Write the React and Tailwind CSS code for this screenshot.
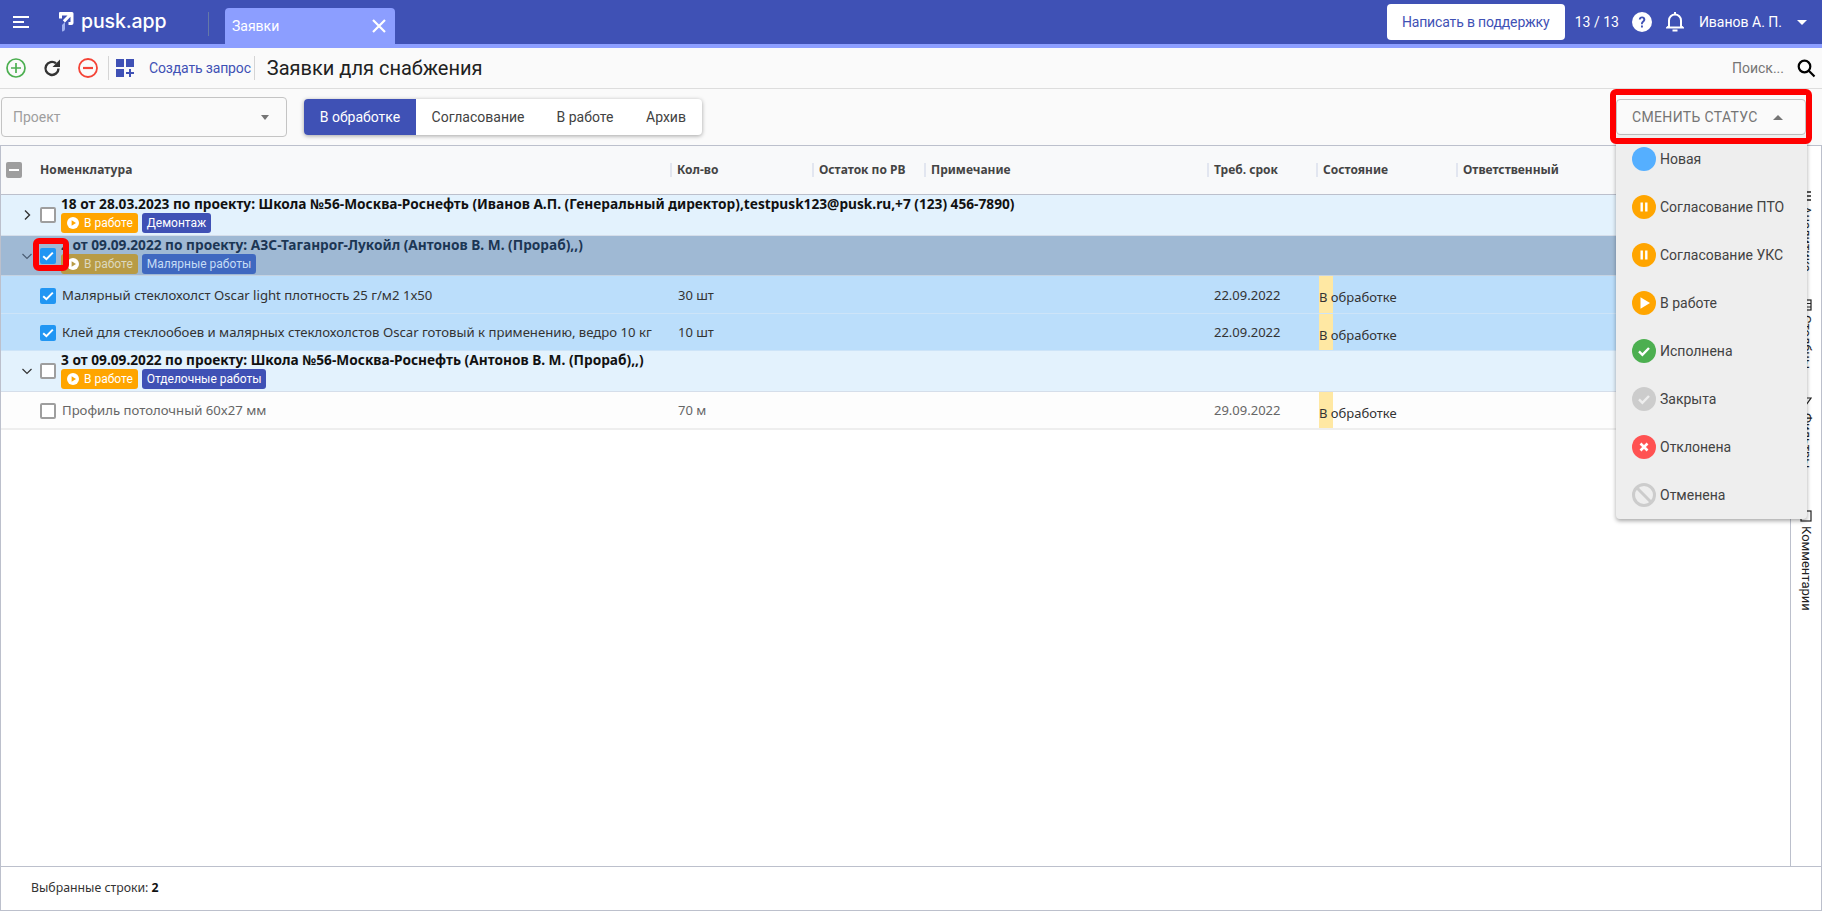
import React from "react";

const cols = "grid grid-cols-[669px_142px_112px_283px_109px_140px_1fr]";

function Check({ state = "off" }) {
  if (state === "on") {
    return (
      <span className="flex h-4 w-4 shrink-0 items-center justify-center rounded-[2px] bg-[#2196f3]">
        <svg width="12" height="10" viewBox="0 0 12 10" fill="none">
          <path d="M1.2 5.2 4.4 8.2 10.8 1.6" stroke="#fff" strokeWidth="2" />
        </svg>
      </span>
    );
  }
  if (state === "some") {
    return (
      <span className="flex h-4 w-4 shrink-0 items-center justify-center rounded-[2px] bg-[#9e9e9e]">
        <span className="h-[2px] w-[10px] bg-white" />
      </span>
    );
  }
  return <span className="block h-4 w-4 shrink-0 rounded-[2px] border-2 border-[#9e9e9e] bg-white" />;
}

function Chevron({ open, color = "#333" }) {
  return (
    <svg width="12" height="12" viewBox="0 0 12 12" fill="none" className="shrink-0">
      {open ? (
        <path d="M1.5 4 6 8.5 10.5 4" stroke={color} strokeWidth="1.2" />
      ) : (
        <path d="M4 1.5 8.5 6 4 10.5" stroke={color} strokeWidth="1.4" />
      )}
    </svg>
  );
}

function PlayDot({ fill = "#ffa500" }) {
  return (
    <svg width="12" height="12" viewBox="0 0 12 12" className="shrink-0">
      <circle cx="6" cy="6" r="6" fill="#fff" />
      <path d="M4.6 3.2v5.6L9 6z" fill={fill} />
    </svg>
  );
}

function GroupRow({ title, type, open, checked, selected, h }) {
  return (
    <div
      className={`flex shrink-0 items-start border-b ${h} ${
        selected ? "border-[#c5d3e2] bg-[#9fb9d4]" : "border-[#d5deea] bg-[#e3f2fd]"
      }`}
    >
      <div className="flex items-center pt-[12px] pl-[20px]">
        <Chevron open={open} color={selected ? "#4a5d73" : "#333"} />
        <div className="ml-[7px]">
          <Check state={checked ? "on" : "off"} />
        </div>
      </div>
      <div className="ml-[5px] flex flex-col">
        <div
          className={`h-[18px] text-[13.7px] leading-[18px] font-bold whitespace-nowrap ${
            selected ? "text-[#1c3654]" : "text-[#111]"
          }`}
        >
          {title}
        </div>
        <div className="flex gap-1 font-[Roboto] text-[12px] leading-[20px]">
          <span
            className={`flex h-5 items-center gap-[5px] rounded-[3px] pr-[5px] pl-[6px] ${
              selected ? "bg-[#b89b45] text-[#dcd8bf]" : "bg-[#ffa500] text-white"
            }`}
          >
            <PlayDot fill={selected ? "#b89b45" : "#ffa500"} />В работе
          </span>
          <span
            className={`flex h-5 items-center rounded-[3px] px-[5px] ${
              selected ? "bg-[#3f68c0] text-[#c5dcf5]" : "bg-[#3f51b5] text-white"
            }`}
          >
            {type}
          </span>
        </div>
      </div>
    </div>
  );
}

function ItemRow({ name, qty, date, checked, h, selected }) {
  return (
    <div
      className={`${cols} shrink-0 border-b text-[13px] ${h} ${
        selected ? "border-[#cde4f8] bg-[#bbdefb] text-[#333]" : "border-b-2 border-[#eeeeee] bg-[#fdfdfd] text-[#666]"
      }`}
    >
      <div className="flex items-center pt-[2px] pl-[39px]">
        <Check state={checked ? "on" : "off"} />
        <span className="ml-[6px] text-[13.15px] whitespace-nowrap">{name}</span>
      </div>
      <div className="flex items-center pt-[2px] pl-[8px]">{qty}</div>
      <div />
      <div />
      <div className="flex items-center pt-[2px] pl-[7px]">{date}</div>
      <div className="pl-[3px]">
        <div className="h-full w-[14px] bg-[#ffe8a3] pt-[12px] whitespace-nowrap text-[#333]">В обработке</div>
      </div>
      <div />
    </div>
  );
}

function HeadCell({ children, first }) {
  return (
    <div className="flex items-center">
      {!first && <span className="mr-[5px] h-[14px] w-[2px] bg-[#e2e6f0]" />}
      <span className="whitespace-nowrap">{children}</span>
    </div>
  );
}

const statuses = [
  { label: "Новая", icon: <circle cx="12" cy="12" r="12" fill="#55afff" /> },
  {
    label: "Согласование ПТО",
    icon: (
      <>
        <circle cx="12" cy="12" r="12" fill="#ffa500" />
        <path d="M8.5 7.5h2.4v9H8.5zM13.1 7.5h2.4v9h-2.4z" fill="#fff" />
      </>
    ),
  },
  {
    label: "Согласование УКС",
    icon: (
      <>
        <circle cx="12" cy="12" r="12" fill="#ffa500" />
        <path d="M8.5 7.5h2.4v9H8.5zM13.1 7.5h2.4v9h-2.4z" fill="#fff" />
      </>
    ),
  },
  {
    label: "В работе",
    icon: (
      <>
        <circle cx="12" cy="12" r="12" fill="#ffa500" />
        <path d="M8.5 6.2v11.6L18 12z" fill="#fff" />
      </>
    ),
  },
  {
    label: "Исполнена",
    icon: (
      <>
        <circle cx="12" cy="12" r="12" fill="#4caf50" />
        <path d="M7 12.4l3.4 3.4L17 9" stroke="#fff" strokeWidth="2.4" fill="none" />
      </>
    ),
  },
  {
    label: "Закрыта",
    icon: (
      <>
        <circle cx="12" cy="12" r="12" fill="#cccccc" />
        <path d="M7 12.4l3.4 3.4L17 9" stroke="#eee" strokeWidth="2.4" fill="none" />
      </>
    ),
  },
  {
    label: "Отклонена",
    icon: (
      <>
        <circle cx="12" cy="12" r="12" fill="#ff5252" />
        <path d="M8.5 8.5l7 7M15.5 8.5l-7 7" stroke="#fff" strokeWidth="2.6" />
      </>
    ),
  },
  {
    label: "Отменена",
    icon: (
      <>
        <circle cx="12" cy="12" r="10.5" fill="none" stroke="#ccc" strokeWidth="3" />
        <path d="M4.8 4.8l14.4 14.4" stroke="#ccc" strokeWidth="3" />
      </>
    ),
  },
];

function SideTab({ icon, label, pt }) {
  return (
    <div className={`flex flex-col items-center ${pt}`}>
      {icon}
      <span className="mt-[4px] font-[Roboto] text-[13px] leading-[16px] whitespace-nowrap text-[#222] [writing-mode:vertical-lr]">
        {label}
      </span>
    </div>
  );
}

export default function App() {
  return (
    <div className="relative flex h-[911px] w-[1822px] flex-col overflow-hidden bg-white font-['Noto_Sans',sans-serif]">
      {/* top bar */}
      <div className="flex h-12 shrink-0 border-b-4 border-[#8c9eff] bg-[#3f51b5] font-[Roboto] text-[14px] text-white">
        <div className="flex w-[208px] items-center">
          <svg width="16" height="12" viewBox="0 0 16 12" className="ml-[13px]" fill="#fff">
            <rect width="16" height="2" />
            <rect y="5" width="11" height="2" />
            <rect y="10" width="16" height="2" />
          </svg>
          <svg width="15" height="20" viewBox="0 0 15 20" className="ml-[30px]">
            <path d="M3 13 6 10v6.500a3 3 0 0 1-3 3z" fill="#9fb0ef" />
            <path
              d="M1 0h12a1.500 1.500 0 0 1 1.500 1.500V11a2 2 0 0 1-2 2H9.500v-3H11.500V4.800L6 10.500 3.800 8.200 8.500 3.500H3v3H0V1a1 1 0 0 1 1-1z"
              fill="#fff"
            />
          </svg>
          <span className="ml-[7px] font-[Inter] text-[19.5px] leading-none font-medium tracking-[-0.1px]">pusk.app</span>
        </div>
        <span className="mt-3 h-6 w-px bg-[#6478a8]" />
        <div className="mt-2 ml-4 flex h-9 w-[170px] items-center justify-between rounded-t bg-[#8c9eff] pr-[9px] pl-[7px]">
          <span>Заявки</span>
          <svg width="14" height="14" viewBox="0 0 14 14" stroke="#fff" strokeWidth="2.200">
            <path d="M1 1l12 12M13 1 1 13" />
          </svg>
        </div>
        <div className="ml-auto flex items-center">
          <div className="flex h-9 w-[178px] items-center justify-center rounded bg-white tracking-[-0.15px] text-[#3f51b5]">
            Написать в поддержку
          </div>
          <span className="ml-[10px]">13 / 13</span>
          <svg width="20" height="20" viewBox="0 0 20 20" className="ml-[13px]">
            <circle cx="10" cy="10" r="10" fill="#fff" />
            <path d="M6.800 7.600C6.900 5.700 8.200 4.500 10.100 4.500c1.900 0 3.200 1.200 3.200 2.900 0 2.600-2.500 2.500-2.500 4.900H9c0-3.300 2.300-3.300 2.300-4.800 0-.7-.5-1.300-1.200-1.300-.9 0-1.300.6-1.400 1.400zM9 13.500h1.900v1.900H9z" fill="#3f51b5" />
          </svg>
          <svg width="18" height="20" viewBox="0 0 18 20" className="ml-[14px]" fill="none" stroke="#fff" strokeWidth="2">
            <path d="M3 14V8.500a6 6 0 0 1 12 0V14l1.500 1.500h-15z" />
            <path d="M9 0v3M6.500 18.500h5" />
          </svg>
          <span className="ml-[15px]">Иванов А. П.</span>
          <span className="mr-[15px] ml-[15px] h-0 w-0 border-x-[5px] border-t-[5px] border-x-transparent border-t-white" />
        </div>
      </div>

      {/* toolbar */}
      <div className="flex h-[41px] shrink-0 items-center border-b border-[#dddddd] bg-[#fafafa]">
        <svg width="20" height="20" viewBox="0 0 20 20" className="ml-[6px]" fill="none" stroke="#4caf50" strokeWidth="1.700">
          <circle cx="10" cy="10" r="9" />
          <path d="M10 5v10M5 10h10" />
        </svg>
        <svg width="18" height="18" viewBox="0 0 18 18" className="ml-[17px]" fill="none" stroke="#333" strokeWidth="2.400">
          <path d="M15.500 9.500a6.500 6.500 0 1 1-2.500-5.200" />
          <path d="M17 0.500v7.500H9.500z" fill="#333" stroke="none" />
        </svg>
        <svg width="20" height="20" viewBox="0 0 20 20" className="ml-[17px]" fill="none" stroke="#f44336" strokeWidth="1.800">
          <circle cx="10" cy="10" r="9" />
          <path d="M5 10h10" strokeWidth="2.200" />
        </svg>
        <span className="ml-[10px] h-6 w-px bg-[#d5d5d5]" />
        <svg width="18" height="18" viewBox="0 0 18 18" className="ml-[7px]" fill="#3f51b5">
          <rect width="8" height="8" />
          <rect x="10" width="8" height="8" />
          <rect y="10" width="8" height="8" />
          <path d="M13 10h2v3h3v2h-3v3h-2v-3h-3v-2h3z" />
        </svg>
        <span className="ml-[15px] font-[Roboto] text-[14px] tracking-[-0.15px] text-[#3f51b5]">Создать запрос</span>
        <span className="ml-[3px] h-6 w-px bg-[#d5d5d5]" />
        <span className="ml-[12px] font-[Roboto] text-[20px] text-[#212121]">Заявки для снабжения</span>
        <div className="ml-auto flex items-center font-[Roboto] text-[14px] text-[#757575]">
          Поиск...
          <svg width="19" height="19" viewBox="0 0 19 19" className="mr-[6px] ml-[13px]" fill="none" stroke="#000" strokeWidth="2.200">
            <circle cx="7.500" cy="7.500" r="5.800" />
            <path d="M11.800 11.800 17.500 17.500" />
          </svg>
        </div>
      </div>

      {/* filters */}
      <div className="flex h-[56px] shrink-0 items-center bg-[#fafafa] font-[Roboto] text-[14px]">
        <div className="ml-px flex h-10 w-[286px] items-center justify-between rounded border border-[#c4c4c4] pr-[17px] pl-[11px] text-[#9e9e9e]">
          Проект
          <span className="h-0 w-0 border-x-[4px] border-t-[5px] border-x-transparent border-t-[#757575]" />
        </div>
        <div className="ml-[17px] flex h-9 overflow-hidden rounded bg-white text-[#424242] shadow-[0_1px_4px_rgba(0,0,0,0.35)]">
          <span className="flex w-[112px] items-center justify-center bg-[#3f51b5] text-white">В обработке</span>
          <span className="flex w-[124px] items-center justify-center">Согласование</span>
          <span className="flex w-[90px] items-center justify-center">В работе</span>
          <span className="flex w-[72px] items-center justify-center">Архив</span>
        </div>
        <div className="relative mr-4 ml-auto h-9 w-[190px]">
          <div className="flex h-full items-center justify-between rounded border border-[#c4c4c4] bg-[#fafafa] pr-[22px] pl-[15px] tracking-[0.35px] text-[#757575]">
            СМЕНИТЬ СТАТУС
            <span className="h-0 w-0 border-x-[5px] border-b-[5px] border-x-transparent border-b-[#757575]" />
          </div>
          <div className="absolute top-full left-0 z-10 w-[191px] rounded-b bg-[#eeeeee] shadow-[0_2px_4px_rgba(0,0,0,0.35)]">
            {statuses.map((s) => (
              <div key={s.label} className="flex h-12 items-center gap-1 pl-4 text-[#424242]">
                <svg width="24" height="24" viewBox="0 0 24 24" className="shrink-0">
                  {s.icon}
                </svg>
                {s.label}
              </div>
            ))}
          </div>
          <div className="absolute -top-[10px] -right-[6px] -bottom-[9px] -left-[6px] z-20 rounded-md border-[6px] border-[#ff0000]" />
        </div>
      </div>

      {/* table + side tabs */}
      <div className="flex min-h-0 flex-1 border border-[#bcc0cc]">
        <div className="flex min-w-0 flex-1 flex-col">
          <div className={`${cols} h-[49px] shrink-0 border-b border-[#bcc0cc] bg-[#f8f9fa] text-[12px] font-bold text-[#444]`}>
            <div className="flex items-center pl-[5px]">
              <Check state="some" />
              <span className="ml-[18px] tracking-[0.1px]">Номенклатура</span>
            </div>
            <HeadCell>Кол-во</HeadCell>
            <HeadCell>Остаток по РВ</HeadCell>
            <HeadCell>Примечание</HeadCell>
            <HeadCell>Треб. срок</HeadCell>
            <HeadCell>Состояние</HeadCell>
            <HeadCell>Ответственный</HeadCell>
          </div>
          <GroupRow
            h="h-[41px]"
            title="18 от 28.03.2023 по проекту: Школа №56-Москва-Роснефть (Иванов А.П. (Генеральный директор),testpusk123@pusk.ru,+7 (123) 456-7890)"
            type="Демонтаж"
          />
          <GroupRow
            h="h-[40px]"
            open
            checked
            selected
            title="2 от 09.09.2022 по проекту: АЗС-Таганрог-Лукойл (Антонов В. М. (Прораб),,)"
            type="Малярные работы"
          />
          <ItemRow
            selected
            checked
            h="h-[38px]"
            name="Малярный стеклохолст Oscar light плотность 25 г/м2 1x50"
            qty="30 шт"
            date="22.09.2022"
          />
          <ItemRow
            selected
            checked
            h="h-[37px]"
            name="Клей для стеклообоев и малярных стеклохолстов Oscar готовый к применению, ведро 10 кг"
            qty="10 шт"
            date="22.09.2022"
          />
          <GroupRow
            h="h-[41px]"
            open
            title="3 от 09.09.2022 по проекту: Школа №56-Москва-Роснефть (Антонов В. М. (Прораб),,)"
            type="Отделочные работы"
          />
          <ItemRow h="h-[38px]" name="Профиль потолочный 60x27 мм" qty="70 м" date="29.09.2022" />
          <div className="relative">
            <div className="absolute -top-[192px] left-[32px] h-[33px] w-[36px] rounded-md border-[6px] border-[#ff0000]" />
          </div>
        </div>
        <div className="flex w-[31px] shrink-0 flex-col items-center border-l border-[#bcc0cc]">
          <SideTab
            pt="pt-[44px]"
            label="Аналитика"
            icon={
              <svg width="12" height="12" viewBox="0 0 12 12" stroke="#222" strokeWidth="1.400">
                <path d="M1 2h10M1 6h10M1 10h10" />
              </svg>
            }
          />
          <SideTab
            pt="pt-[27px]"
            label="Столбцы"
            icon={
              <svg width="12" height="12" viewBox="0 0 12 12" fill="none" stroke="#222" strokeWidth="1.200">
                <rect x="1" y="1" width="10" height="10" />
                <path d="M1 4.500h10M1 8h10" />
              </svg>
            }
          />
          <SideTab
            pt="pt-[28px]"
            label="Фильтры"
            icon={
              <svg width="12" height="12" viewBox="0 0 12 12" fill="none" stroke="#222" strokeWidth="1.200">
                <path d="M1 1v10l5-3 5-7z" />
              </svg>
            }
          />
          <SideTab
            pt="pt-[42px]"
            label="Комментарии"
            icon={
              <svg width="12" height="12" viewBox="0 0 12 12" fill="none" stroke="#222" strokeWidth="1.200">
                <rect x="1" y="1" width="10" height="10" />
              </svg>
            }
          />
        </div>
      </div>

      {/* footer */}
      <div className="flex h-[44px] shrink-0 items-center border-x border-b border-[#bcc0cc] pl-[30px] text-[12.3px] text-[#333]">
        Выбранные строки:&nbsp;<b className="text-[#111]">2</b>
      </div>
    </div>
  );
}
